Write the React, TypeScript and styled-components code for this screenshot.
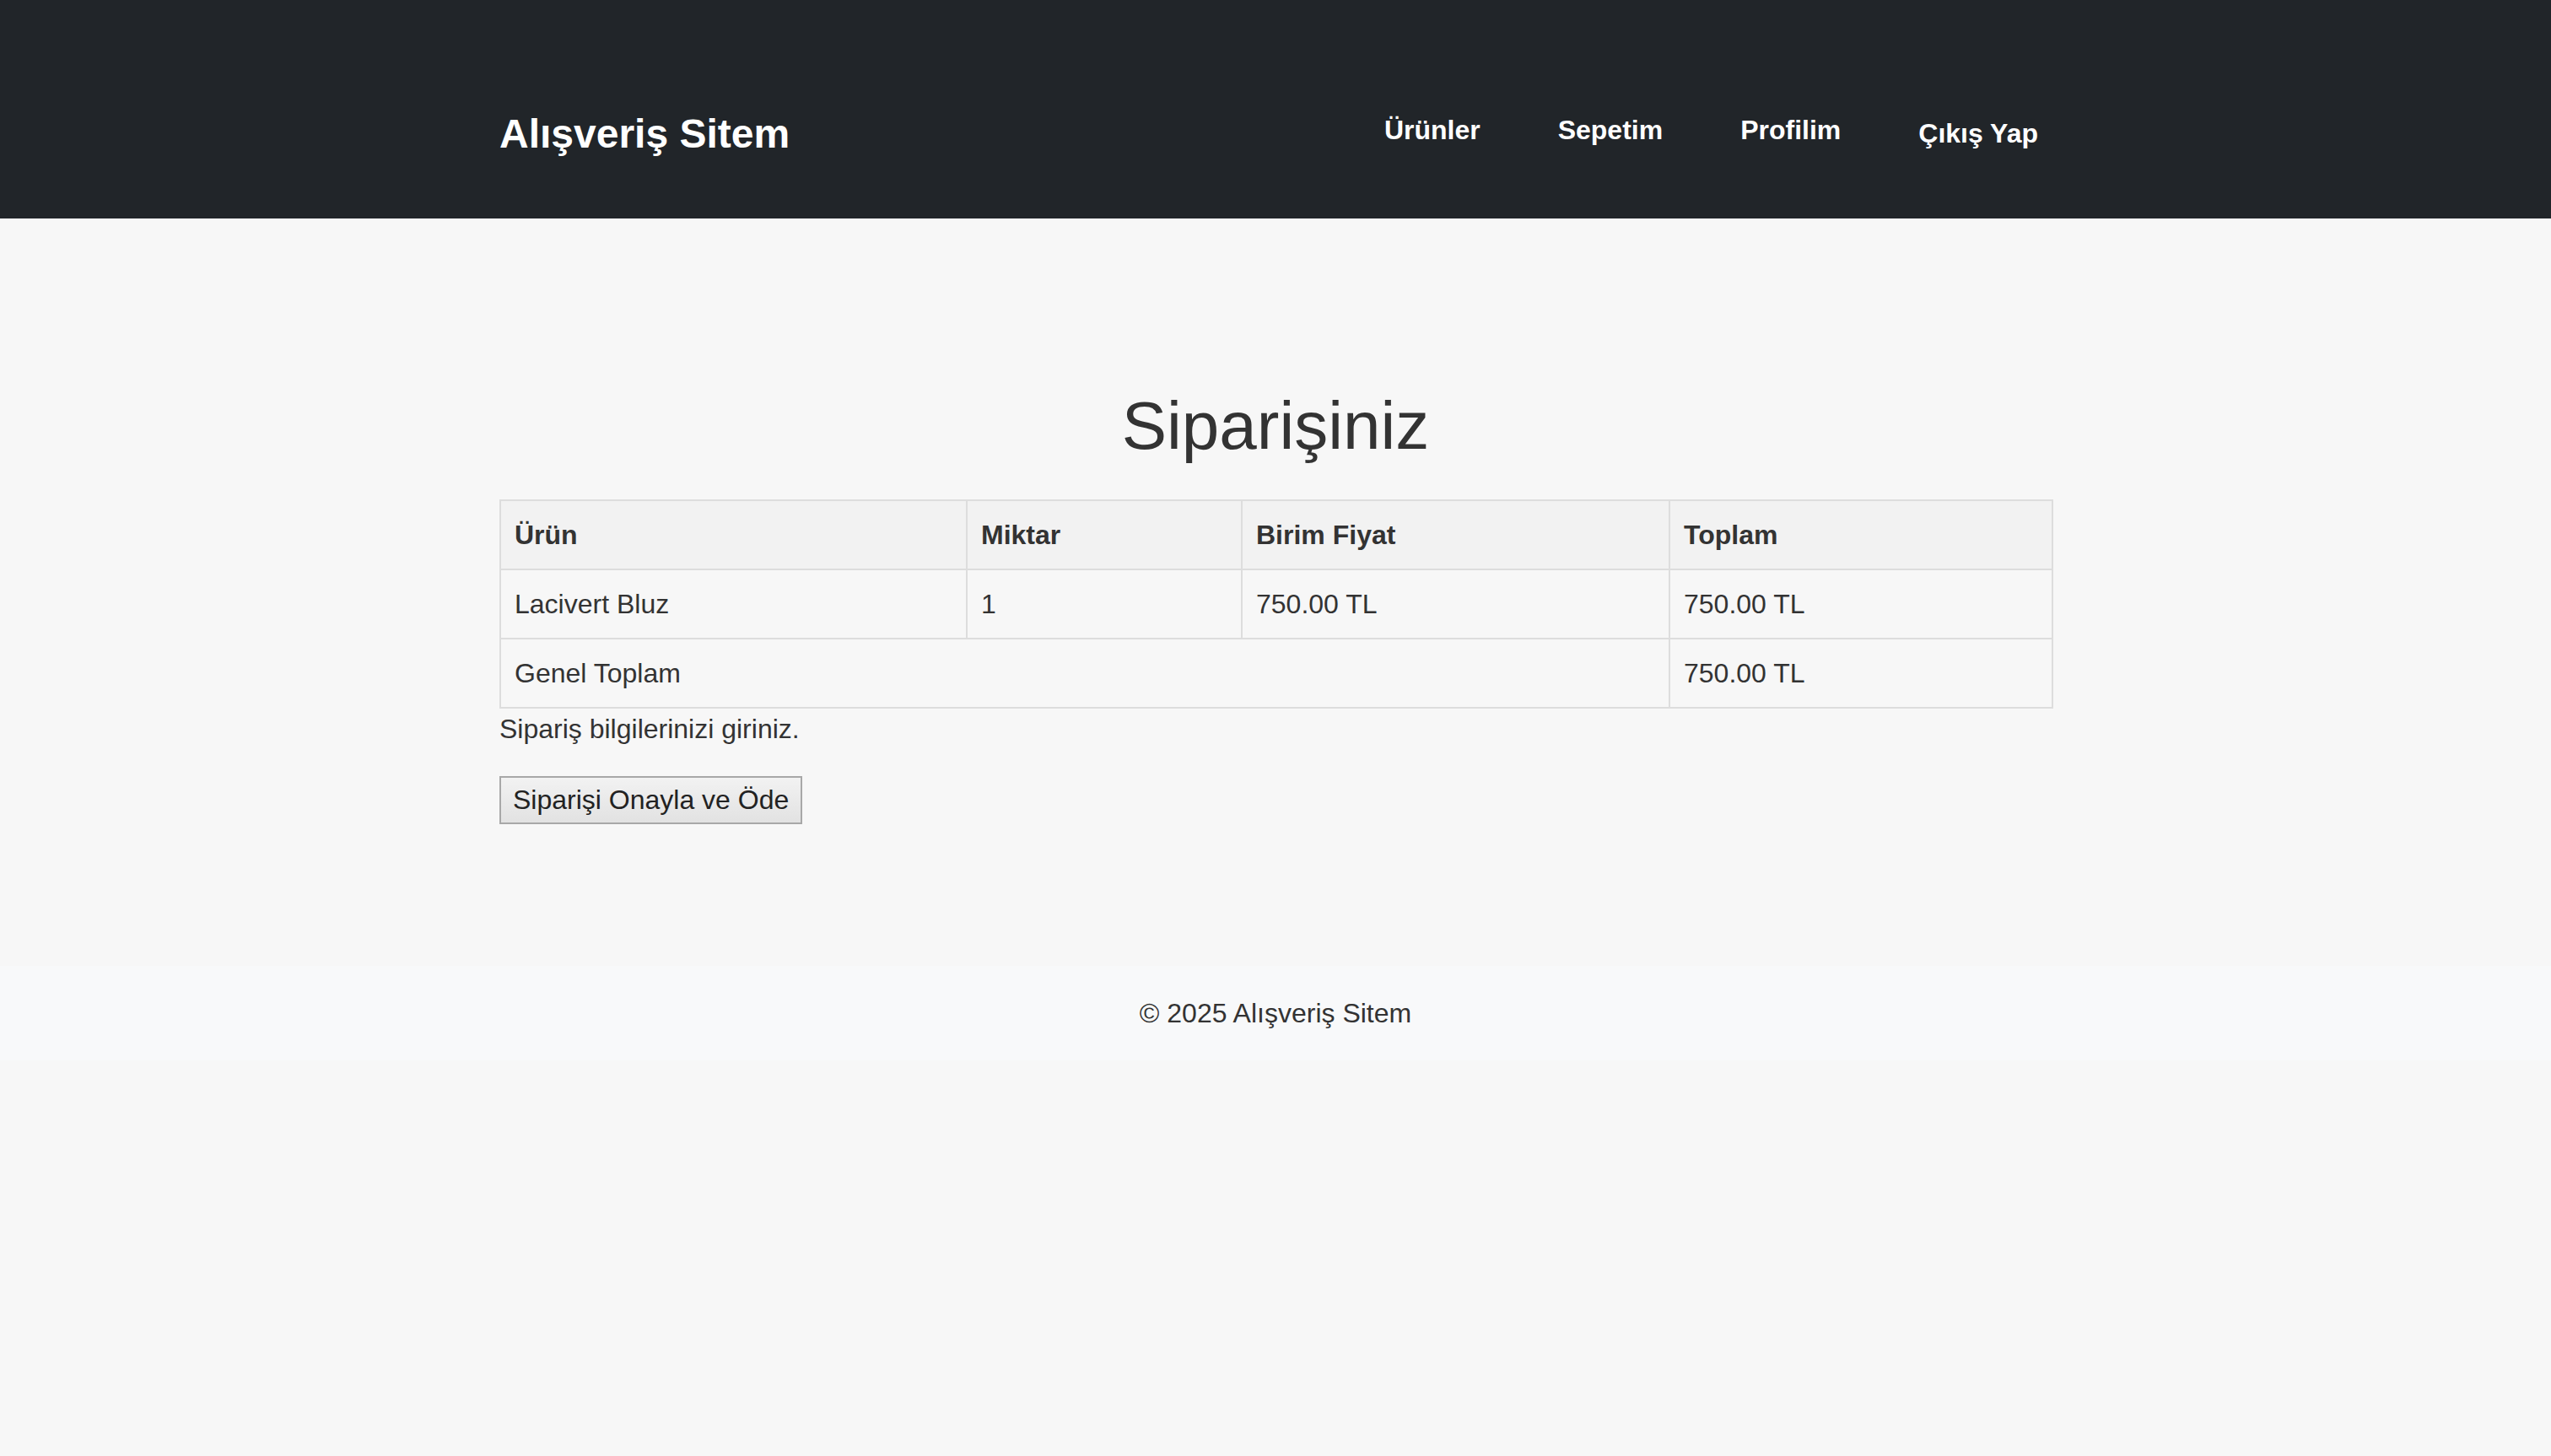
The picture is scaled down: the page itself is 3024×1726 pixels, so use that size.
import React from "react";
import styled, { createGlobalStyle } from "styled-components";

const GlobalStyle = createGlobalStyle`
  html, body {
    margin: 0;
    padding: 0;
    background: #f7f7f7;
  }
  body {
    font-family: "Liberation Sans", Arial, Helvetica, sans-serif;
    font-size: 32px;
    line-height: 1.5;
    color: #333333;
  }
  * { box-sizing: border-box; }
`;

const Header = styled.header`
  height: 259px;
  padding-top: 57px;
  background: #212529;
  display: flex;
`;

const HeaderInner = styled.div`
  width: 1840px;
  margin: 0 auto;
  display: flex;
  justify-content: space-between;
  align-items: center;
`;

const Logo = styled.h1`
  margin: 0;
  font-size: 48px;
  font-weight: 700;
  line-height: normal;
  color: #ffffff;
`;

const NavList = styled.ul`
  list-style: none;
  margin: 0;
  padding: 0;
  display: flex;
  align-items: center;
  gap: 60px;
`;

const NavItem = styled.li`
  display: flex;
  align-items: center;
`;

const NavLink = styled.a`
  display: block;
  padding: 0 16px 8px;
  font-size: 32px;
  font-weight: 700;
  line-height: normal;
  color: #ffffff;
  text-decoration: none;
  cursor: pointer;
`;

const LogoutButton = styled.button`
  display: block;
  padding: 0 16px;
  margin: 0;
  border: none;
  background: transparent;
  font-family: "Liberation Sans", Arial, Helvetica, sans-serif;
  font-size: 32px;
  font-weight: 700;
  line-height: normal;
  color: #ffffff;
  cursor: pointer;
`;

const Main = styled.main`
  width: 1840px;
  margin: 0 auto;
  padding: 149px 0 168px;
`;

const Title = styled.h2`
  margin: 51px 0 41px;
  font-size: 80px;
  font-weight: 400;
  line-height: normal;
  text-align: center;
  color: #333333;
`;

const Table = styled.table`
  width: 100%;
  border-collapse: collapse;
  table-layout: fixed;
  border: 2px solid #dddddd;
`;

const Col = styled.col<{ $w: number }>`
  width: ${(p) => p.$w}px;
`;

const HeadCell = styled.th`
  padding: 16px;
  border: 2px solid #dddddd;
  background: #f2f2f2;
  font-weight: 700;
  text-align: left;
  line-height: 48px;
  color: #333333;
`;

const Cell = styled.td`
  padding: 16px;
  border: 2px solid #dddddd;
  text-align: left;
  line-height: 48px;
  color: #333333;
`;

const Note = styled.p`
  margin: 0 0 32px;
  line-height: 48px;
`;

const Form = styled.form`
  display: flex;
  margin: 0;
`;

const SubmitButton = styled.button`
  padding: 8px 14px;
  margin: 0;
  border: 2px solid #a8a8a8;
  border-radius: 0;
  background: linear-gradient(#f2f2f2, #e2e2e2);
  font-family: "Liberation Sans", Arial, Helvetica, sans-serif;
  font-size: 32px;
  line-height: normal;
  color: #222222;
  cursor: pointer;
`;

const Footer = styled.footer`
  padding: 32px 0;
  background: #f8f9fa;
  text-align: center;
  line-height: 48px;
  color: #333333;
`;

export default function App() {
  return (
    <>
      <GlobalStyle />
      <Header>
        <HeaderInner>
          <Logo>Alışveriş Sitem</Logo>
          <nav>
            <NavList>
              <NavItem><NavLink>Ürünler</NavLink></NavItem>
              <NavItem><NavLink>Sepetim</NavLink></NavItem>
              <NavItem><NavLink>Profilim</NavLink></NavItem>
              <NavItem><LogoutButton type="button">Çıkış Yap</LogoutButton></NavItem>
            </NavList>
          </nav>
        </HeaderInner>
      </Header>
      <Main>
        <Title>Siparişiniz</Title>
        <Table>
          <colgroup>
            <Col $w={553} />
            <Col $w={326} />
            <Col $w={507} />
            <Col $w={454} />
          </colgroup>
          <thead>
            <tr>
              <HeadCell>Ürün</HeadCell>
              <HeadCell>Miktar</HeadCell>
              <HeadCell>Birim Fiyat</HeadCell>
              <HeadCell>Toplam</HeadCell>
            </tr>
          </thead>
          <tbody>
            <tr>
              <Cell>Lacivert Bluz</Cell>
              <Cell>1</Cell>
              <Cell>750.00 TL</Cell>
              <Cell>750.00 TL</Cell>
            </tr>
            <tr>
              <Cell colSpan={3}>Genel Toplam</Cell>
              <Cell>750.00 TL</Cell>
            </tr>
          </tbody>
        </Table>
        <Note>Sipariş bilgilerinizi giriniz.</Note>
        <Form onSubmit={(e) => e.preventDefault()}>
          <SubmitButton type="submit">Siparişi Onayla ve Öde</SubmitButton>
        </Form>
      </Main>
      <Footer>© 2025 Alışveriş Sitem</Footer>
    </>
  );
}
